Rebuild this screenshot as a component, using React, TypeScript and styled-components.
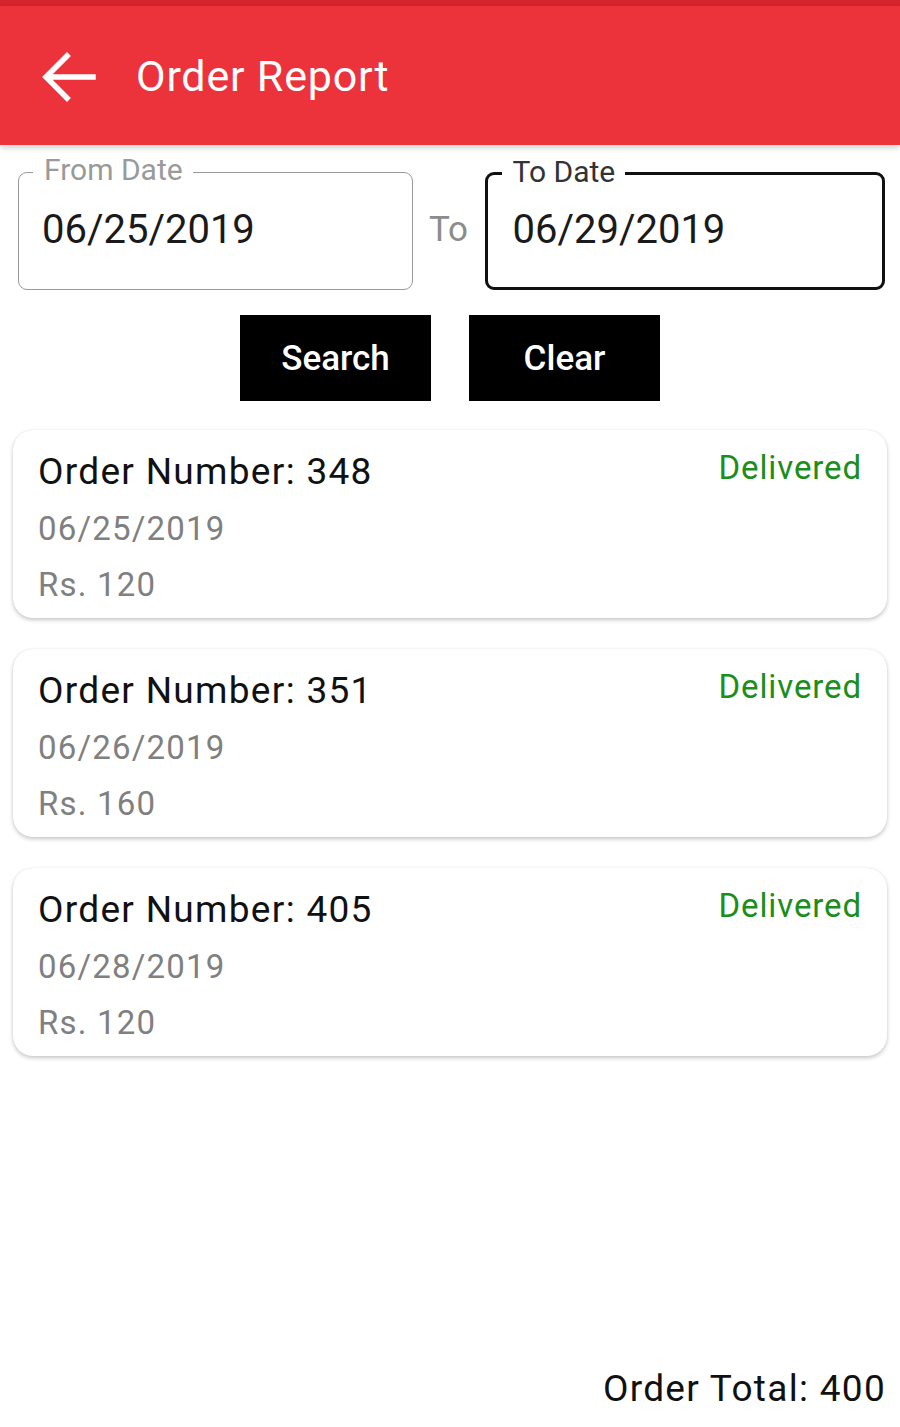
import { FC } from "react";
import styled, { createGlobalStyle, css } from "styled-components";

const GlobalStyle = createGlobalStyle`
  html, body {
    margin: 0;
    padding: 0;
    background: #ffffff;
  }

  body {
    font-family: Roboto, "Noto Sans", "Liberation Sans", sans-serif;
  }
`;

interface Order {
  number: number;
  date: string;
  amount: number;
  status: string;
}

const orders: Order[] = [
  { number: 348, date: "06/25/2019", amount: 120, status: "Delivered" },
  { number: 351, date: "06/26/2019", amount: 160, status: "Delivered" },
  { number: 405, date: "06/28/2019", amount: 120, status: "Delivered" },
];

const BackArrow: FC = () => (
  <svg width="56" height="52" viewBox="0 0 56 52" fill="none">
    <path
      d="M53 27H8M27 6L6 27l21 21"
      stroke="#ffffff"
      strokeWidth="5.5"
      strokeLinecap="square"
    />
  </svg>
);

interface DateFieldProps {
  label: string;
  value: string;
  active?: boolean;
}

const DateField: FC<DateFieldProps> = ({ label, value, active }) => (
  <Field active={active}>
    <Legend active={active}>{label}</Legend>
    <FieldValue>{value}</FieldValue>
  </Field>
);

const OrderCard: FC<{ order: Order }> = ({ order }) => (
  <Card>
    <CardInfo>
      <OrderTitle>Order Number: {order.number}</OrderTitle>
      <Meta>{order.date}</Meta>
      <Meta>Rs. {order.amount}</Meta>
    </CardInfo>
    <Status>{order.status}</Status>
  </Card>
);

const App: FC = () => {
  const total = orders.reduce((sum, o) => sum + o.amount, 0);

  return (
    <Page>
      <GlobalStyle />
      <StatusBar />
      <Header>
        <BackArrow />
        <Title>Order Report</Title>
      </Header>

      <Filters>
        <DateField label="From Date" value="06/25/2019" />
        <ToText>To</ToText>
        <DateField label="To Date" value="06/29/2019" active />
      </Filters>

      <Buttons>
        <ActionButton>Search</ActionButton>
        <ActionButton>Clear</ActionButton>
      </Buttons>

      <List>
        {orders.map((order) => (
          <OrderCard key={order.number} order={order} />
        ))}
      </List>

      <Footer>Order Total: {total}</Footer>
    </Page>
  );
};

const Page = styled.div`
  min-height: 1427px;
  display: flex;
  flex-direction: column;
  box-sizing: border-box;
`;

const StatusBar = styled.div`
  height: 6px;
  background: #d3252b;
`;

const Header = styled.header`
  height: 139px;
  display: flex;
  align-items: center;
  gap: 40px;
  padding-left: 40px;
  background: #ec333b;
  box-shadow: 0 3px 6px rgba(0, 0, 0, 0.18);
  position: relative;
  z-index: 1;
`;

const Title = styled.h1`
  margin: 0;
  font-size: 43px;
  font-weight: 400;
  letter-spacing: 0.8px;
  color: #ffffff;
`;

const Filters = styled.div`
  display: flex;
  align-items: center;
  padding: 27px 15px 0 18px;
`;

const Field = styled.div<{ active?: boolean }>`
  flex: 1;
  height: 118px;
  box-sizing: border-box;
  position: relative;
  border-radius: 9px;
  display: flex;
  align-items: center;
  padding: 0 0 0 23px;

  ${({ active }) =>
    active
      ? css`
          border: 3px solid #111111;
          padding-left: 25px;
        `
      : css`
          border: 1.5px solid #9a9a9a;
        `}
`;

const Legend = styled.span<{ active?: boolean }>`
  position: absolute;
  top: -20px;
  left: 14px;
  padding: 0 10px 0 11px;
  background: #ffffff;
  font-size: 30px;
  line-height: 34px;
  color: ${({ active }) => (active ? "#333333" : "#9a9a9a")};
`;

const FieldValue = styled.span`
  font-size: 40px;
  color: #1a1a1a;
  margin-top: -4px;
`;

const ToText = styled.span`
  width: 72px;
  text-align: center;
  font-size: 35px;
  color: #8c8c8c;
  margin-top: -4px;
`;

const Buttons = styled.div`
  display: flex;
  justify-content: center;
  gap: 38px;
  margin-top: 25px;
`;

const ActionButton = styled.button`
  width: 191px;
  height: 86px;
  border: none;
  background: #000000;
  color: #ffffff;
  font-family: Roboto, "Noto Sans", "Liberation Sans", sans-serif;
  font-size: 35px;
  font-weight: 500;
  padding: 0;
`;

const List = styled.div`
  display: flex;
  flex-direction: column;
  gap: 31px;
  padding: 29px 13px 0 13px;
`;

const Card = styled.div`
  height: 188px;
  box-sizing: border-box;
  border-radius: 20px;
  background: #ffffff;
  box-shadow: 0 2px 4px rgba(0, 0, 0, 0.22), 0 0 1px rgba(0, 0, 0, 0.12);
  display: flex;
  justify-content: space-between;
  padding: 20px 25px 0 25px;
`;

const CardInfo = styled.div`
  display: flex;
  flex-direction: column;
`;

const OrderTitle = styled.span`
  font-size: 37px;
  line-height: 44px;
  letter-spacing: 1.3px;
  color: #111111;
  margin-bottom: 7px;
`;

const Meta = styled.span`
  font-size: 33px;
  line-height: 56px;
  color: #808080;
  letter-spacing: 1.2px;
`;

const Status = styled.span`
  font-size: 33px;
  line-height: 36px;
  letter-spacing: 0.9px;
  color: #1b8e1b;
`;

const Footer = styled.div`
  margin-top: auto;
  padding: 0 14px 16px 0;
  text-align: right;
  font-size: 37px;
  line-height: 44px;
  letter-spacing: 1.3px;
  color: #111111;
`;

export default App;
